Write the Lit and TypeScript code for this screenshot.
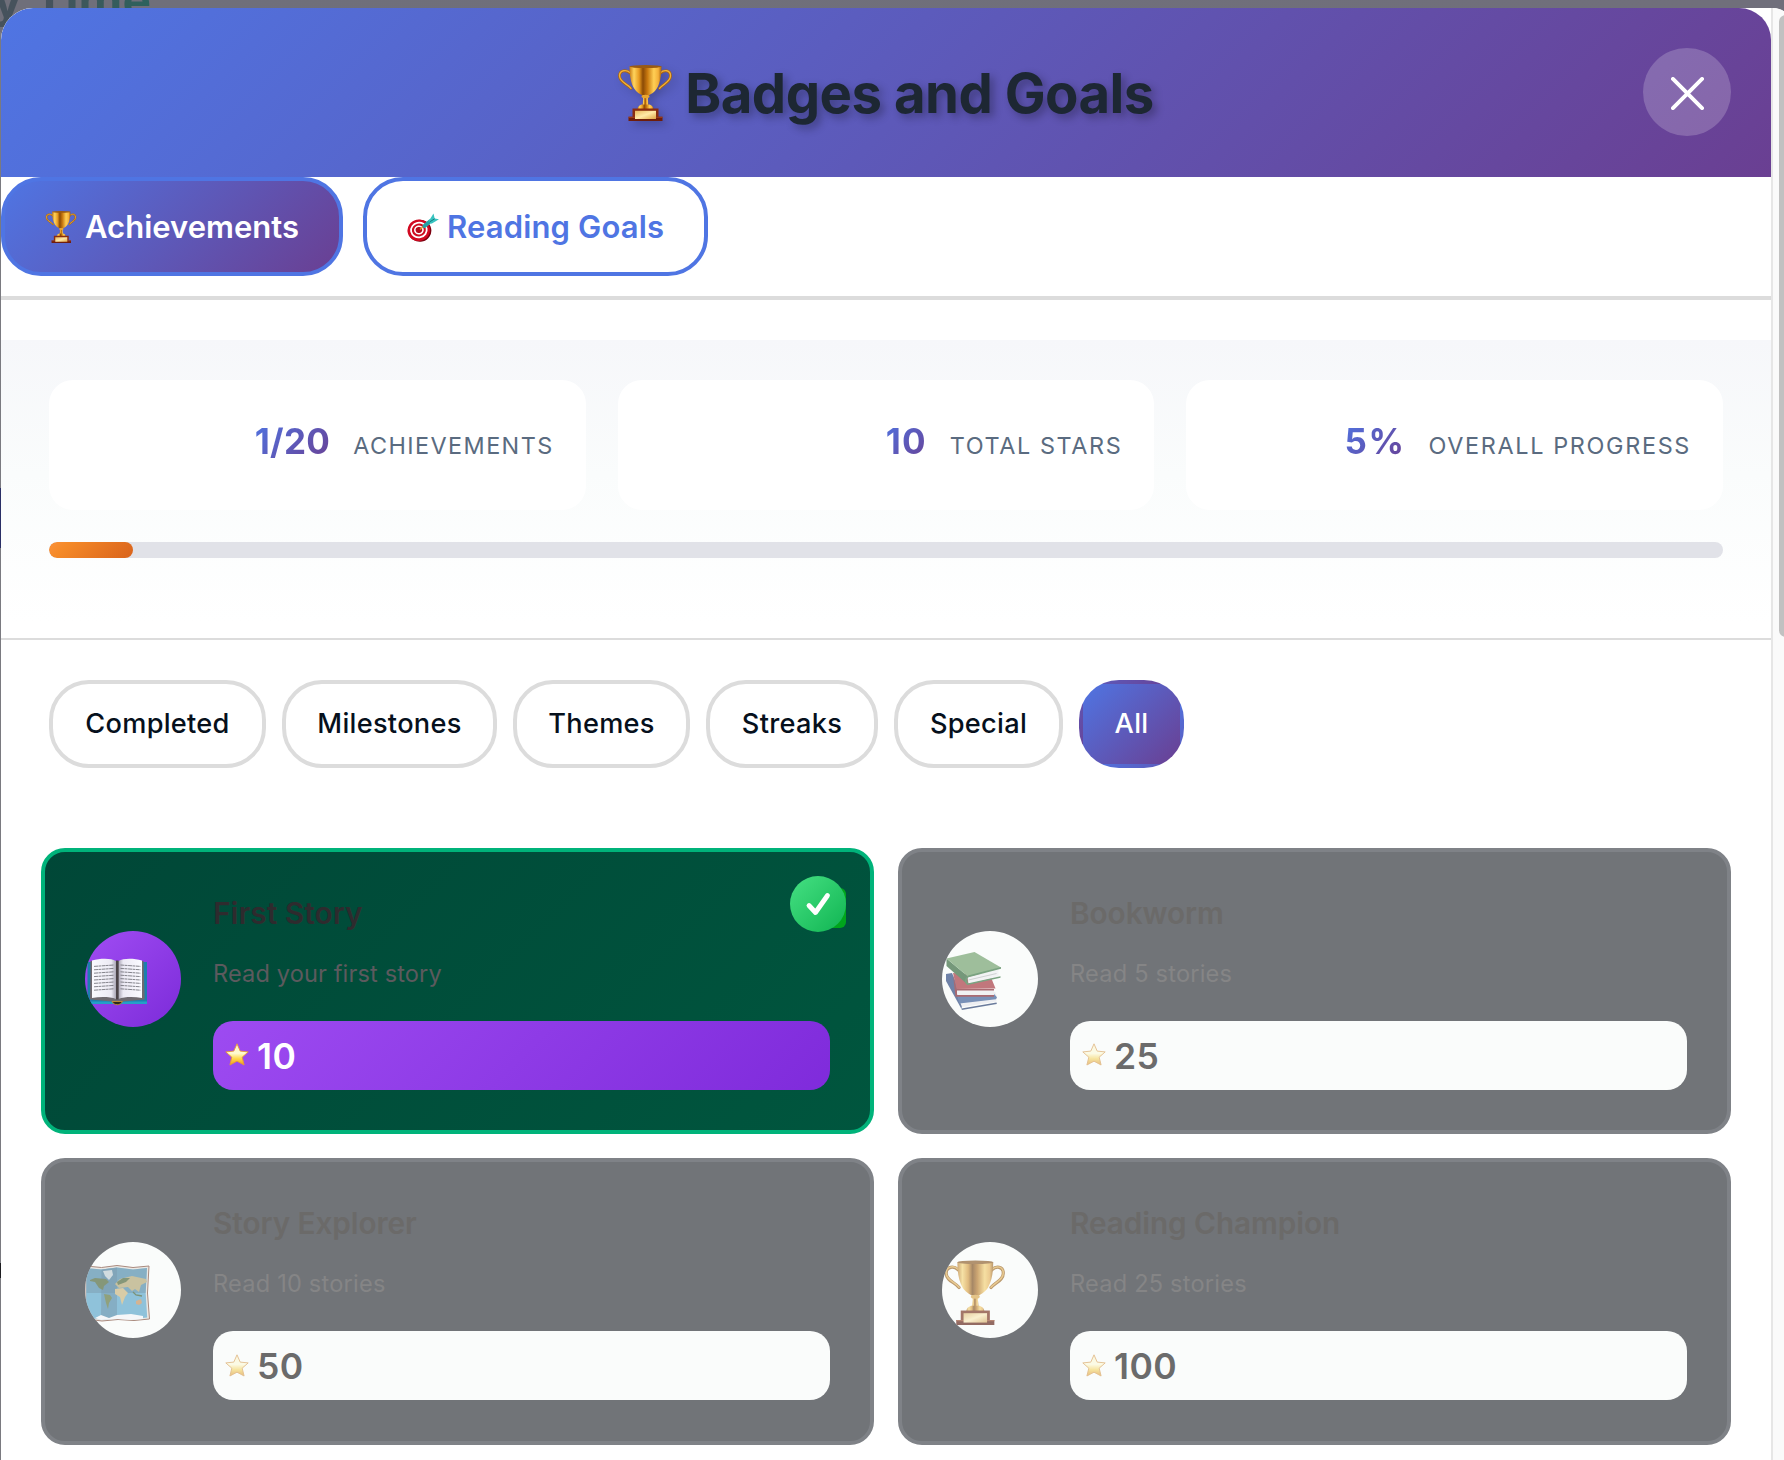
import { LitElement, html, css, svg, nothing } from "lit";
import type { TemplateResult } from "lit";
import { customElement, property, state } from "lit/decorators.js";
import { classMap } from "lit/directives/class-map.js";

type IconName = "book" | "books" | "map" | "trophy";

interface Achievement {
  title: string;
  text: string;
  stars: number;
  icon: IconName;
  done: boolean;
}

const ACHIEVEMENTS: Achievement[] = [
  { title: "First Story", text: "Read your first story", stars: 10, icon: "book", done: true },
  { title: "Bookworm", text: "Read 5 stories", stars: 25, icon: "books", done: false },
  { title: "Story Explorer", text: "Read 10 stories", stars: 50, icon: "map", done: false },
  { title: "Reading Champion", text: "Read 25 stories", stars: 100, icon: "trophy", done: false },
];

const STATS = [
  { value: "1/20", valueTracking: 0.3, label: "Achievements", tracking: 1.43 },
  { value: "10", valueTracking: 1.2, label: "Total stars", tracking: 1.6 },
  { value: "5%", valueTracking: 1.5, label: "Overall progress", tracking: 1.66 },
];

const FILTERS = [
  { label: "Completed", width: 217 },
  { label: "Milestones", width: 215 },
  { label: "Themes", width: 177 },
  { label: "Streaks", width: 172 },
  { label: "Special", width: 169 },
  { label: "All", width: 105 },
];

/* Trophy drawn on a 54 x 56 canvas. */
const trophyShape = svg`
  <defs>
    <linearGradient id="cup" x1="0" x2="1" y1="0" y2="0">
      <stop offset="0" stop-color="#c87a14"/><stop offset=".14" stop-color="#ffd45c"/>
      <stop offset=".3" stop-color="#e79a20"/><stop offset=".42" stop-color="#8a4a06"/>
      <stop offset=".56" stop-color="#c8780f"/><stop offset=".76" stop-color="#ffcf55"/>
      <stop offset=".9" stop-color="#f4b03a"/><stop offset="1" stop-color="#a5610c"/>
    </linearGradient>
    <linearGradient id="plate" x1="0" x2="1" y1="0" y2="1">
      <stop offset="0" stop-color="#e9b85c"/><stop offset=".5" stop-color="#ffe9a8"/><stop offset="1" stop-color="#e0a544"/>
    </linearGradient>
  </defs>
  <g fill="none" stroke-linecap="round">
    <path d="M12 8C8.500 4.500 1.500 5 1.500 11c0 6.500 8 8 11.500 12.500" stroke="#a9640f" stroke-width="2.800"/>
    <path d="M12 7.600C8.500 4.200 1.500 5 1.500 10.800c0 6.300 8 8 11.500 12.500" stroke="#f0b13a" stroke-width="1.300"/>
    <path d="M42.500 8C46 4.500 52.500 5 52.500 11c0 6.500-7.500 8-11 12.500" stroke="#a9640f" stroke-width="2.800"/>
    <path d="M42.500 7.600C46 4.200 52.500 5 52.500 10.800c0 6.300-7.500 8-11 12.500" stroke="#f0b13a" stroke-width="1.300"/>
  </g>
  <path d="M11.500 1.200h32c0 8-1 16-4.500 22-2.500 4.200-6 5.800-8.500 7.300h-6c-2.500-1.500-6-3.100-8.500-7.300-3.500-6-4.500-14-4.500-22z" fill="url(#cup)"/>
  <ellipse cx="27.500" cy="1.600" rx="16" ry="1.500" fill="#9a5a12"/>
  <path d="M24.500 30h6l-.7 4 .8 7H24.400l.8-7z" fill="url(#cup)"/>
  <ellipse cx="27.500" cy="31.500" rx="4" ry="1.700" fill="#e8a62e"/>
  <path d="M19.500 44c0-2.600 3-4.600 5-4.600h6c2 0 5 2 5 4.600z" fill="url(#cup)"/>
  <path d="M14.500 43.500h26V52h-26z" fill="#8a2d10"/>
  <path d="M10.500 51.800h34V56h-34z" fill="#6f1d0b"/>
  <path d="M10.500 51.800h34v1h-34z" fill="#a9451d"/>
  <path d="M17 45.800h21V54H17z" fill="url(#plate)"/>`;

const trophy = (cls: string) => html`<svg class=${cls} viewBox="0 0 54 56">${trophyShape}</svg>`;

const dart = html`<svg class="tab-icon" viewBox="0 0 32 32">
  <g transform="rotate(-12 12 19.500)">
    <ellipse cx="12.800" cy="20" rx="11.500" ry="11" fill="#7c0010"/>
    <ellipse cx="11.800" cy="19.200" rx="11.300" ry="10.800" fill="#d20a22"/>
    <ellipse cx="12" cy="19" rx="8.800" ry="8.200" fill="#fff"/>
    <ellipse cx="12" cy="19" rx="7" ry="6.400" fill="#cf0c20"/>
    <ellipse cx="12" cy="19" rx="4.900" ry="4.500" fill="#fff"/>
    <ellipse cx="12" cy="19" rx="3.300" ry="3" fill="#b50a1c"/>
  </g>
  <path d="M13 18.500l4.500-4" stroke="#d99a2b" stroke-width="1.400"/>
  <path d="M17.500 15l6-5" stroke="#23a3a6" stroke-width="4" stroke-linecap="round"/>
  <path d="M21.500 10.500l5-8 1.200 5 4.300.8-7.500 4.500z" fill="#38c3c0"/>
  <path d="M22.500 11l5.200-3.200" stroke="#137c80" stroke-width="1"/>
</svg>`;

const star = html`<svg class="star" viewBox="0 0 24 23">
  <defs><linearGradient id="gold" x1="0" x2="0" y1="0" y2="1">
    <stop offset="0" stop-color="#fff3c0"/><stop offset=".45" stop-color="#fffbd2"/>
    <stop offset=".7" stop-color="#ffd84a"/><stop offset="1" stop-color="#f09a1c"/>
  </linearGradient></defs>
  <path d="M12 .8l3.200 7.300 8 .8-6 5.300 1.900 7.800L12 18.200 4.900 22l1.900-7.800-6-5.300 8-.8z" fill="url(#gold)" stroke="#e59a3a" stroke-width=".9" stroke-linejoin="round"/>
</svg>`;

const textLines = (x1: number, x2: number, skew: number) =>
  [0, 1, 2, 3, 4, 5, 6, 7].map(
    (i) => svg`<path d="M${x1} ${34 + i * 3.4 + (skew > 0 ? 1.4 : 0)}L${x2} ${34 + i * 3.4 + (skew > 0 ? 0 : 1.4)}" stroke="#77777f" stroke-width=".9" stroke-dasharray="4 .5 2.500 .6"/>`,
  );

/* Pictures for the round medallions, each on a 96 x 96 canvas. */
const PICTURES: Record<IconName, TemplateResult> = {
  book: svg`
    <defs><linearGradient id="page" x1="0" x2="1"><stop offset="0" stop-color="#fafaff"/><stop offset=".8" stop-color="#eceaf4"/><stop offset="1" stop-color="#a9a6b4"/></linearGradient>
    <linearGradient id="page2" x1="1" x2="0"><stop offset="0" stop-color="#fafaff"/><stop offset=".8" stop-color="#eceaf4"/><stop offset="1" stop-color="#a9a6b4"/></linearGradient></defs>
    <path d="M2.500 31h59.500v42H2.500z" fill="#1c7fae"/>
    <path d="M2.500 70.500h59.500V73H2.500z" fill="#24a0c8"/>
    <path d="M5.500 30h53l1.200 38.500L33 71 5 68.500z" fill="#6f6a70"/>
    <path d="M7 29.500c8-2.300 19-2.600 24 .5v38c-6-2.500-16-2.500-24-1z" fill="url(#page)"/>
    <path d="M57 29.500c-8-2.300-18.500-2.600-23.500.5v38c6-2.500 15.500-2.500 23.500-1z" fill="url(#page2)"/>
    ${textLines(9, 29, 1)}${textLines(35.500, 55.500, -1)}
    <path d="M31 29.500h2.500v39H31z" fill="#4a4246"/>
    <path d="M27 70.500c2 4.300 8.500 4.300 10.500 0z" fill="#2d2a1c" stroke="#b98a36" stroke-width="1"/>`,
  books: svg`
    <path d="M4 43l6-1 11 26-1.500 10L4 50z" fill="#1f4590"/>
    <path d="M16 66l37-5 1.500 3v6.500L20 76z" fill="#e9e9ee"/>
    <path d="M15 64l37-1 3 3.200-1 2-36.500 4.300z" fill="#2c59a8"/>
    <path d="M19.500 77.500l35-6 .3 1.600-35 6z" fill="#1a3a7c"/>
    <path d="M11 42l37 2 5.500 13.500-39 .5z" fill="#c22a36"/>
    <path d="M14 58h38v7H15.500z" fill="#ececef"/>
    <path d="M11 44l3.500 14H52v1.600H15v4.400h37v1.700H13.500z" fill="#9a1826"/>
    <path d="M4.500 27.500V35L25.500 53.500V45z" fill="#246a2e"/>
    <path d="M25.500 46l31-7.500V46l-30 7z" fill="#efeff1"/>
    <path d="M26.500 49l28-6.500" stroke="#b9bcc0" stroke-width="1"/>
    <path d="M4.500 27.500L32.500 21 59 36.500 26 45.500z" fill="#63a45d"/>
    <path d="M26 44.500l33-8.500v1.800l-32.500 8.500c-2.500 2-2 4.800 0 5.900l32-7v1.600l-33 7.200c-3.500-2-3.500-6.500.5-9.500z" fill="#2a7a36"/>`,
  map: svg`
    <path d="M1 24l15.500 1.500L32 23.500l16 2 16-1.500-1.500 27 2 26-15.500 1.500-16-1-16 1.500-16-2z" fill="#e3ded6" stroke="#8e4c34" stroke-width="1"/>
    <path d="M1.500 26l15 1.500L32 25.500l16 2 14-1.500-1.300 25 1.500 24.500-14.200 1.500-16-1-16 1.500-15-2z" fill="#45a8d8"/>
    <path d="M16.500 27.500L32 25.500v51l-16 1.500z" fill="#33759e" opacity=".6"/>
    <path d="M1.500 26l15 1.500L32 25.500l16 2 14-1.500-1.300 25H1.500z" fill="#2f6d94" opacity=".5"/>
    <path d="M5 38l5-2 11 1 3 3-5 4-1 4-4-2-4-6-5-1z" fill="#45662a"/>
    <path d="M18 29l9-1 1 5-4 5-4-4z" fill="#b9ccd4"/>
    <path d="M19 52l6 1 2 3-3 5-1 6-2-6z" fill="#55752c"/>
    <path d="M30 42l5-5 12-3 14 3 1 3-6 3-2 7-4-3-3 2-4-4-9 1z" fill="#b5a560"/>
    <path d="M32 40l6-4h7l-4 4-8 3z" fill="#45662a"/>
    <path d="M30 47l8-1 5 5-3 4-3 8-2-8-5-3z" fill="#d0b468"/>
    <path d="M51 59l5-2 1 4-3 2-3-1z" fill="#d08a48"/>
    <path d="M48 50l3 3 6 1" stroke="#33602a" stroke-width="1.300" fill="none"/>
    <path d="M10 76l6-3 8 3 8-3 14-1 12 2v3l-12 1-14-1-16 1z" fill="#f2f5f8"/>`,
  trophy: svg`<g transform="translate(2.500 18.500) scale(1.120 1.150)">${trophyShape}</g>`,
};

@customElement("achievement-card")
export class AchievementCard extends LitElement {
  @property({ attribute: false }) item!: Achievement;

  static styles = css`
    :host { display: block; font-family: Inter, "Liberation Sans", sans-serif; }
    * { box-sizing: border-box; }
    .card {
      position: relative;
      display: flex;
      align-items: flex-start;
      height: 286.400px;
      padding: 0 40px;
      border: 4px solid #7f8287;
      border-radius: 24px;
      background: #717478;
    }
    .done { border-color: #00b37a; background: linear-gradient(135deg, #004737, #00563e); background-origin: border-box; }
    .medal {
      flex: none;
      width: 96px;
      height: 96px;
      margin-top: 79.300px;
      border-radius: 50%;
      overflow: hidden;
      background: #fafcfb;
    }
    .done .medal { background: linear-gradient(135deg, #a04df3, #7c2bd9); }
    .picture { display: block; width: 96px; height: 96px; opacity: .66; filter: grayscale(.25); }
    .done .picture, .done .star { opacity: 1; filter: none; }
    .body { flex: 1; min-width: 0; margin-left: 32px; padding: 41px 0 0; }
    .title { margin: 0; font-size: 29.800px; line-height: 40px; font-weight: 600; letter-spacing: -.1px; color: #6b6a69; }
    .text { margin: 23px 0 28.700px; font-size: 23.600px; line-height: 36px; letter-spacing: .2px; color: #858586; }
    .done .title { color: #2e2b2e; letter-spacing: .04px; }
    .done .text { color: #5c5a5e; letter-spacing: .12px; }
    .pill {
      display: flex;
      align-items: center;
      height: 69px;
      padding-left: 12px;
      border-radius: 20px;
      background: #fafcfb;
      color: #6b6b6b;
      font-size: 35.500px;
      font-weight: 600;
      letter-spacing: .4px;
    }
    .count { padding-top: 2px; }
    .done .pill { background: linear-gradient(135deg, #9d4bf1, #7f2bdb); color: #fff; }
    .star { width: 24px; height: 23px; margin: 0 8px 1px 0; opacity: .65; filter: grayscale(.25); }
    .check { position: absolute; right: 24px; top: 24px; width: 56px; height: 56px; }
  `;

  render() {
    const { title, text, stars, icon, done } = this.item;
    return html`<article class=${classMap({ card: true, done })}>
      <div class="medal"><svg class="picture" viewBox="0 0 96 96">${PICTURES[icon]}</svg></div>
      <div class="body">
        <h3 class="title">${title}</h3>
        <p class="text">${text}</p>
        <div class="pill">${star}<span class="count">${stars}</span></div>
      </div>
      ${done
        ? html`<svg class="check" viewBox="0 0 56 56">
            <defs><linearGradient id="ok" x1="0" x2="1" y1="0" y2="1"><stop offset=".1" stop-color="#40dc7e"/><stop offset=".9" stop-color="#16b957"/></linearGradient></defs>
            <rect x="16" y="12" width="40" height="40" rx="6" fill="#00a51c"/>
            <circle cx="28" cy="28" r="28" fill="url(#ok)"/>
            <path d="M19 29.500l6.500 7L37.500 19.500" fill="none" stroke="#fff" stroke-width="4.800" stroke-linecap="round" stroke-linejoin="round"/>
          </svg>`
        : nothing}
    </article>`;
  }
}

@customElement("app-root")
export class AppRoot extends LitElement {
  @state() private filter = "All";
  @state() private progress = 5;

  static styles = css`
    :host { display: block; font-family: Inter, "Liberation Sans", sans-serif; }
    * { box-sizing: border-box; }
    .backdrop {
      position: relative;
      width: 100%;
      height: 1460px;
      padding: 8px 0 0 1px;
      overflow: hidden;
      background: linear-gradient(90deg, #6f6f7a, #706f7b);
    }
    .brand {
      position: absolute;
      right: calc(100% - 151px);
      top: -29px;
      font-size: 48px;
      line-height: 58px;
      font-weight: 700;
      white-space: nowrap;
      background: linear-gradient(90deg, #46525c 60%, #2c625c);
      -webkit-background-clip: text;
      color: transparent;
    }
    .edge {
      position: absolute;
      left: 0;
      top: 32px;
      width: 1px;
      height: 1428px;
      background: linear-gradient(#7a7a80 0 456px, #2a2f66 456px 516px, #7a7a80 516px 1231px, #1c1c20 1231px 1246px, #7a7a80 1246px);
    }
    .modal {
      position: relative;
      display: flex;
      width: 1795px;
      height: 1452px;
      border-radius: 32px 24px 0 0;
      overflow: hidden;
      background: #fff;
    }
    .content { flex: none; width: 1770px; }
    .track { flex: 1; padding: 7px 0 0 6px; border-left: 2px solid #e6e6e6; background: #fafafa; }
    .thumb { width: 13px; height: 622px; border-radius: 7px; background: #c1c1c1; }
    .header {
      position: relative;
      display: flex;
      align-items: center;
      justify-content: center;
      gap: 13px;
      height: 169px;
      border-radius: 32px 32px 0 0;
      background: linear-gradient(135deg, #4f75e3, #6a3f92);
    }
    .title {
      margin: 0;
      padding-top: 1px;
      font-size: 54.500px;
      line-height: 66px;
      font-weight: 700;
      letter-spacing: -.520px;
      color: #1d2733;
      text-shadow: 4px 4px 8px rgba(0, 0, 0, .3);
    }
    .title-icon { width: 54px; height: 56px; filter: drop-shadow(4px 4px 4px rgba(0, 0, 0, .2)); }
    .close {
      position: absolute;
      right: 40px;
      top: 40px;
      display: grid;
      place-items: center;
      width: 88px;
      height: 88px;
      padding: 0;
      border: 0;
      border-radius: 50%;
      background: rgba(255, 255, 255, .2);
    }
    .cross { width: 33px; height: 33px; margin-top: 2px; }
    .tabs { display: flex; gap: 20px; height: 123px; border-bottom: 4px solid #dcdcdc; }
    .tab {
      display: flex;
      align-items: center;
      gap: 8px;
      width: 345px;
      height: 99px;
      padding: 0 0 0 40px;
      border: 4px solid #4f75e3;
      border-radius: 40px;
      background: #fff;
      color: #4f75e3;
      font: 600 31px Inter, sans-serif;
      letter-spacing: .15px;
      white-space: nowrap;
    }
    .tab.active { width: 342px; background: linear-gradient(135deg, #4f75e3, #6a3f92); color: #fff; letter-spacing: .020px; }
    .tab-icon { flex: none; width: 32px; height: 32px; }
    .summary {
      height: 300px;
      margin-top: 40px;
      padding: 40px 48px 0;
      border-bottom: 2px solid #dcdcdc;
      background: linear-gradient(#f6f7fa, #fafcfc 45%, #fff 95%);
    }
    .stats { display: grid; grid-template-columns: repeat(3, 1fr); gap: 32px; }
    .stat {
      display: flex;
      align-items: baseline;
      justify-content: flex-end;
      gap: 23px;
      height: 130px;
      padding: 37px 32px 0 0;
      border-radius: 24px;
      background: #fff;
    }
    .value {
      font-size: 35px;
      line-height: 48px;
      font-weight: 700;
      background: linear-gradient(135deg, #4f75e3, #6a3f92);
      -webkit-background-clip: text;
      color: transparent;
    }
    .label { font-size: 23.400px; line-height: 36px; text-transform: uppercase; color: #5a6b80; }
    .bar { height: 16px; margin-top: 32px; border-radius: 8px; overflow: hidden; background: #e1e2e8; }
    .fill { height: 100%; border-radius: 8px; background: linear-gradient(135deg, #fb923c, #f58a28 20%, #d9631c); }
    .filters { display: flex; gap: 16px; padding: 40px 48px 0; }
    .filter {
      height: 88px;
      padding: 0 0 2px;
      border: 4px solid #dcdcdc;
      border-radius: 40px;
      background: #fff;
      color: #06101c;
      font: 500 27.200px Inter, sans-serif;
      letter-spacing: .28px;
      white-space: nowrap;
    }
    .filter.active { border-color: transparent; background: linear-gradient(135deg, #4f75e3, #6a3f92); color: #fff; }
    .cards { display: grid; grid-template-columns: 833px 833px; gap: 24px; padding: 80px 40px 0; }
  `;

  render() {
    return html`<div class="backdrop">
      <div class="brand">Story Time</div>
      <div class="edge"></div>
      <section class="modal">
        <div class="content">
          <header class="header">
            ${trophy("title-icon")}
            <h1 class="title">Badges and Goals</h1>
            <button class="close"><svg class="cross" viewBox="0 0 34 34"><path d="M2 2l30 30M32 2L2 32" stroke="#fff" stroke-width="4" stroke-linecap="round"/></svg></button>
          </header>
          <nav class="tabs">
            <button class="tab active">${trophy("tab-icon")}<span>Achievements</span></button>
            <button class="tab">${dart}<span>Reading Goals</span></button>
          </nav>
          <section class="summary">
            <div class="stats">
              ${STATS.map((s) => html`<div class="stat">
                <span class="value" style="letter-spacing:${s.valueTracking}px">${s.value}</span>
                <span class="label" style="letter-spacing:${s.tracking}px">${s.label}</span>
              </div>`)}
            </div>
            <div class="bar"><div class="fill" style="width:${this.progress}%"></div></div>
          </section>
          <div class="filters">
            ${FILTERS.map((f) => html`<button
              class=${classMap({ filter: true, active: f.label === this.filter })}
              style="width:${f.width}px"
              @click=${() => (this.filter = f.label)}>${f.label}</button>`)}
          </div>
          <div class="cards">
            ${ACHIEVEMENTS.map((a) => html`<achievement-card .item=${a}></achievement-card>`)}
          </div>
        </div>
        <div class="track"><div class="thumb"></div></div>
      </section>
    </div>`;
  }
}
